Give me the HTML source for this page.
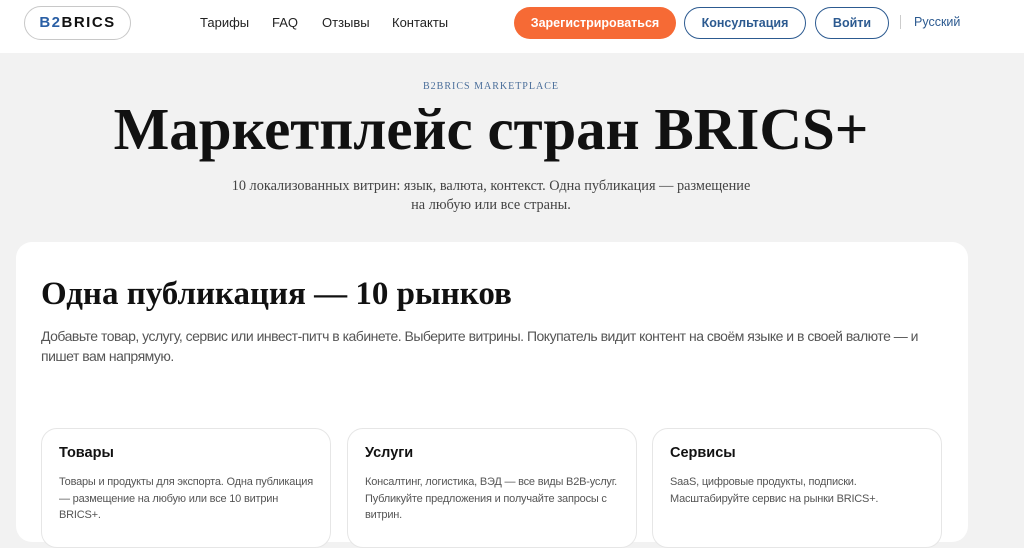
<!DOCTYPE html>
<html><head><meta charset="utf-8"><style>
*{box-sizing:border-box;margin:0;padding:0}
body{width:1024px;height:524px;overflow:hidden;background:#f2f2f2;font-family:"Liberation Sans","DejaVu Sans",sans-serif;position:relative}
.hdr{position:absolute;left:0;top:0;width:1024px;height:53px;background:#fff}
.logo{position:absolute;left:24px;top:6px;width:107px;height:34px;border:1px solid #c8c8c8;border-radius:17px;font-weight:bold;font-size:15px;letter-spacing:1.5px;text-align:center;line-height:32px;color:#111}
.logo b{color:#2a5fa5}
.nav{position:absolute;top:15px;font-size:13px;color:#222}
.btn{position:absolute;top:7px;height:32px;border-radius:16px;font-size:12.5px;font-weight:bold;text-align:center;line-height:30px}
.o{left:514px;width:162px;background:#f66a35;color:#fff;line-height:32px}
.c{left:684px;width:122px;border:1.5px solid #2c5a90;color:#2c5a90}
.v{left:815px;width:74px;border:1.5px solid #2c5a90;color:#2c5a90}
.sep{position:absolute;left:900px;top:15px;width:1px;height:14px;background:#ccc}
.lang{position:absolute;left:914px;top:15px;font-size:12.5px;color:#2c5a90}
.kick{position:absolute;top:81px;left:0;width:982px;text-align:center;font-family:"Liberation Serif",serif;font-size:10px;letter-spacing:1px;color:#4a6e9a}
h1{position:absolute;top:95px;left:0;width:982px;text-align:center;font-family:"Liberation Serif",serif;font-size:59px;font-weight:bold;color:#111}
.sub{position:absolute;top:177px;left:0;width:982px;text-align:center;font-family:"Liberation Serif",serif;font-size:14.3px;line-height:19px;color:#444}
.main{position:absolute;left:16px;top:242px;width:952px;height:300px;background:#fff;border-radius:16px}
h2{position:absolute;left:41px;top:276px;font-family:"Liberation Serif",serif;font-size:33px;font-weight:bold;color:#111}
.p{position:absolute;left:41px;top:327px;width:905px;font-size:14px;letter-spacing:-0.5px;line-height:19.5px;color:#555}
.card{position:absolute;top:428px;width:290px;height:120px;border:1px solid #e6e6e6;border-radius:16px;background:#fff;padding:16px 4px 16px 17px}
.card h3{font-size:14.5px;font-weight:bold;color:#111;margin-bottom:13px}
.card p{font-size:11px;letter-spacing:-0.2px;line-height:16.5px;color:#555;white-space:nowrap}
</style></head><body>
<div class="hdr">
<div class="logo"><b>B2</b>BRICS</div>
<div class="nav" style="left:200px">Тарифы</div>
<div class="nav" style="left:272px">FAQ</div>
<div class="nav" style="left:322px">Отзывы</div>
<div class="nav" style="left:392px">Контакты</div>
<div class="btn o">Зарегистрироваться</div>
<div class="btn c">Консультация</div>
<div class="btn v">Войти</div>
<div class="sep"></div>
<div class="lang">Русский</div>
</div>
<div class="kick">B2BRICS MARKETPLACE</div>
<h1>Маркетплейс стран BRICS+</h1>
<div class="sub">10 локализованных витрин: язык, валюта, контекст. Одна публикация — размещение<br>на любую или все страны.</div>
<div class="main"></div>
<h2>Одна публикация — 10 рынков</h2>
<div class="p">Добавьте товар, услугу, сервис или инвест-питч в кабинете. Выберите витрины. Покупатель видит контент на своём языке и в своей валюте — и пишет вам напрямую.</div>
<div class="card" style="left:41px"><h3>Товары</h3><p>Товары и продукты для экспорта. Одна публикация<br>— размещение на любую или все 10 витрин<br>BRICS+.</p></div>
<div class="card" style="left:347px"><h3>Услуги</h3><p>Консалтинг, логистика, ВЭД — все виды B2B-услуг.<br>Публикуйте предложения и получайте запросы с<br>витрин.</p></div>
<div class="card" style="left:652px"><h3>Сервисы</h3><p>SaaS, цифровые продукты, подписки.<br>Масштабируйте сервис на рынки BRICS+.</p></div>
</body></html>
